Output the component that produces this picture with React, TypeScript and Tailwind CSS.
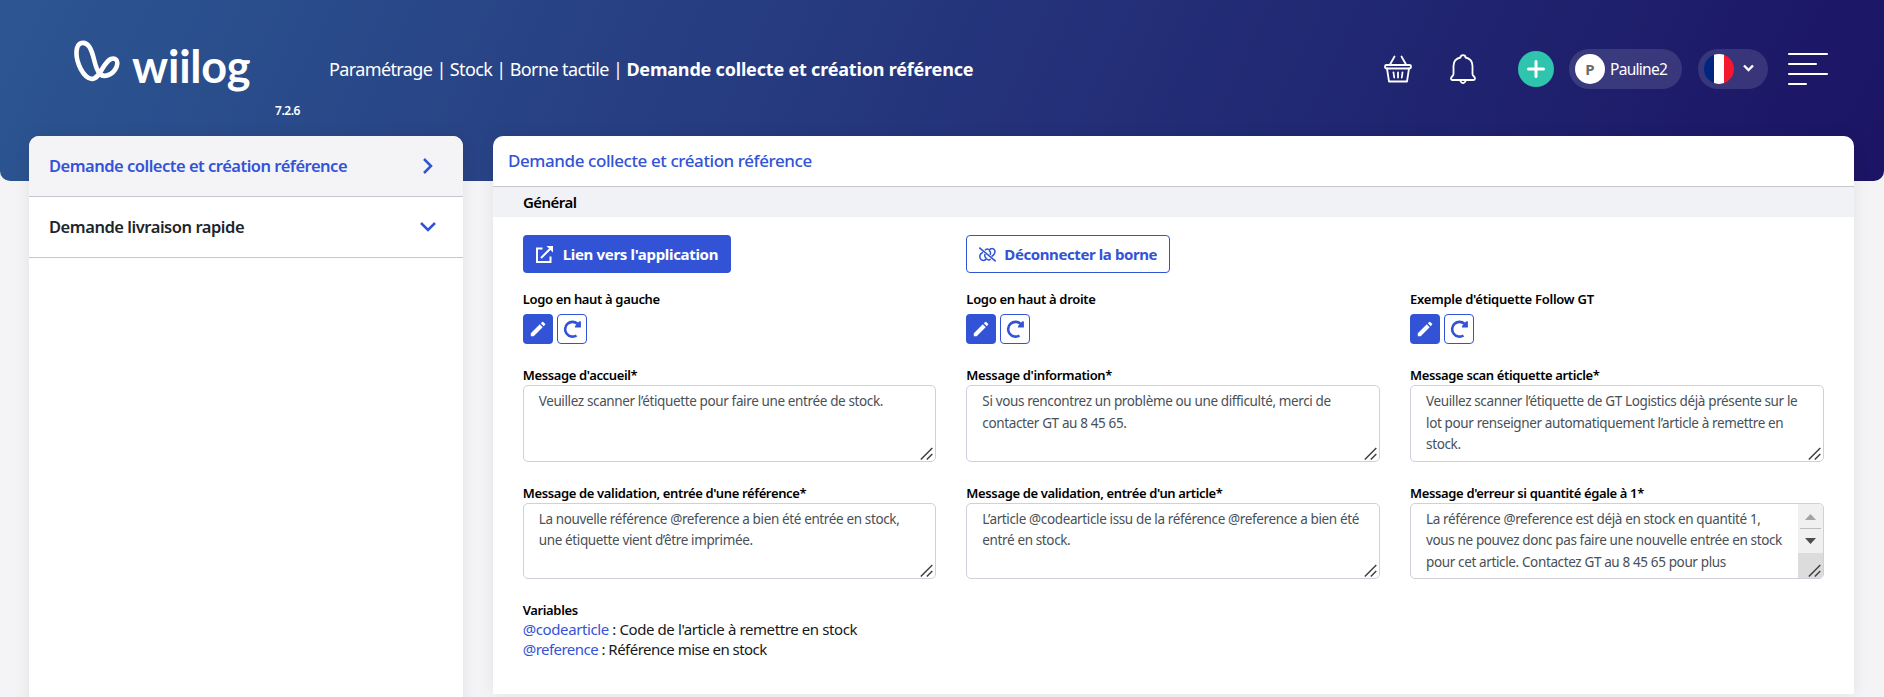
import type { ReactNode } from "react";

const columns = [
  {
    logo: "Logo en haut à gauche",
    logoClass: "tracking-[-0.34px]",
  },
  {
    logo: "Logo en haut à droite",
    logoClass: "tracking-[-0.32px]",
  },
  {
    logo: "Exemple d'étiquette Follow GT",
    logoClass: "tracking-[-0.25px]",
  },
];

const messages: { label: string; lines: string[]; scroll?: boolean; short?: boolean }[] = [
  { label: "Message d'accueil*", lines: ["Veuillez scanner l’étiquette pour faire une entrée de stock."] },
  {
    label: "Message d'information*",
    lines: ["Si vous rencontrez un problème ou une difficulté, merci de", "contacter GT au 8 45 65."],
  },
  {
    label: "Message scan étiquette article*",
    lines: [
      "Veuillez scanner l’étiquette de GT Logistics déjà présente sur le",
      "lot pour renseigner automatiquement l’article à remettre en",
      "stock.",
    ],
  },
  {
    label: "Message de validation, entrée d'une référence*",
    short: true,
    lines: ["La nouvelle référence @reference a bien été entrée en stock,", "une étiquette vient d’être imprimée."],
  },
  {
    label: "Message de validation, entrée d'un article*",
    short: true,
    lines: ["L’article @codearticle issu de la référence @reference a bien été", "entré en stock."],
  },
  {
    label: "Message d'erreur si quantité égale à 1*",
    short: true,
    scroll: true,
    lines: [
      "La référence @reference est déjà en stock en quantité 1,",
      "vous ne pouvez donc pas faire une nouvelle entrée en stock",
      "pour cet article. Contactez GT au 8 45 65 pour plus",
    ],
  },
];

function Logo() {
  return (
    <div className="flex w-[300px] shrink-0 flex-col items-end pl-[74px] text-white">
      <div className="mt-[38px] flex h-[63px] w-[226px] items-start">
        <svg className="mt-[2px] h-[43px] w-[46px] shrink-0" viewBox="0 0 46 43" fill="none" stroke="currentColor" strokeWidth="4.6" strokeLinejoin="round">
          <path d="M15.500 7C21 16 20 28 26 34C30 38 39 35 42.500 27C45 20 41 17.500 37 19C29 22 26 39 18 39C9 38 2 22 2.500 12C3 1 11 .8 15.500 7Z" />
        </svg>
        <span className="ml-[12px] font-['Lato',sans-serif] text-[45px] leading-[56px] font-bold tracking-[-0.2px]">wiilog</span>
      </div>
      <span className="text-[12px] leading-[20px] font-semibold tracking-[-0.44px]">7.2.6</span>
    </div>
  );
}

function BasketIcon() {
  return (
    <svg className="h-[28px] w-[28px]" viewBox="0 0 28 28" fill="none" stroke="currentColor" strokeWidth="1.8" strokeLinecap="round" strokeLinejoin="round">
      <path d="M6 9.500L10.500 1.500M22 9.500L17.500 1.500" />
      <rect x="1" y="10" width="26" height="3.500" rx="1.500" />
      <path d="M3 13.500L5 26.500H23L25 13.500M9.500 17.500L10.200 22.500M14 17.500V22.500M18.500 17.500L17.800 22.500" />
    </svg>
  );
}

function BellIcon() {
  return (
    <svg className="h-[30px] w-[26px]" viewBox="0 0 26 30" fill="none" stroke="currentColor" strokeWidth="1.800" strokeLinecap="round" strokeLinejoin="round">
      <path d="M10.500 3.500C10.500 .3 15.500 .3 15.500 3.500C20 4.500 22.500 8 22.500 12V20C22.500 22 25 22.500 25 24.500Q25 26 23.500 26H2.500Q1 26 1 24.500C1 22.500 3.500 22 3.500 20V12C3.500 8 6 4.500 10.500 3.500Z" />
      <path d="M10 26.300Q13 32 16 26.300" />
    </svg>
  );
}

function Header() {
  return (
    <header className="flex h-[181px] rounded-b-[10px] bg-[linear-gradient(115deg,#2c5692_0%,#243179_55%,#1b1464_100%)] text-white">
      <Logo />
      <div className="flex h-[138px] flex-1 items-center pl-[29px]">
        <div className="text-[18px] leading-[24px] whitespace-pre">
          <span className="tracking-[-0.61px]">{"Paramétrage | Stock | Borne tactile | "}</span>
          <span className="font-bold tracking-[-0.19px]">Demande collecte et création référence</span>
        </div>
      </div>
      <div className="flex h-[138px] shrink-0 items-center pr-[56px]">
        <BasketIcon />
        <span className="ml-[38px]">
          <BellIcon />
        </span>
        <button className="ml-[42px] flex size-[36px] items-center justify-center rounded-full bg-[#2fc4ad]">
          <svg className="size-[18px]" viewBox="0 0 18 18" fill="none" stroke="currentColor" strokeWidth="3" strokeLinecap="round">
            <path d="M9 1.500V16.500M1.500 9H16.500" />
          </svg>
        </button>
        <div className="ml-[15px] flex h-[40px] w-[113px] items-center rounded-full bg-white/12 pl-[6px]">
          <span className="flex size-[30px] items-center justify-center rounded-full bg-white text-[15px] font-bold text-[#6b6b6b]">P</span>
          <span className="ml-[5px] text-[15.500px] leading-[20px] tracking-[-0.72px]">Pauline2</span>
        </div>
        <div className="ml-[16px] flex h-[40px] w-[70px] items-center rounded-full bg-white/12 pl-[6px]">
          <span className="flex size-[30px] overflow-hidden rounded-full">
            <span className="w-[10px] bg-[#00267f]" />
            <span className="w-[10px] bg-white" />
            <span className="w-[10px] bg-[#f31830]" />
          </span>
          <svg className="ml-[9px] h-[8px] w-[11px] -translate-y-px" viewBox="0 0 11 8" fill="none" stroke="currentColor" strokeWidth="2.400">
            <path d="M1 1.500L5.500 6L10 1.500" />
          </svg>
        </div>
        <div className="ml-[20px] flex w-[40px] flex-col gap-[8px]">
          <span className="h-[2px] w-[40px] rounded bg-white" />
          <span className="h-[2px] w-[29px] rounded bg-white" />
          <span className="h-[2px] w-[40px] rounded bg-white" />
          <span className="h-[2px] w-[19px] rounded bg-white" />
        </div>
      </div>
    </header>
  );
}

function Sidebar() {
  return (
    <nav className="h-[600px] w-[434px] shrink-0 overflow-hidden rounded-t-[10px] bg-white text-[16.500px] leading-[24px] font-semibold shadow-[0_0_16px_rgba(0,0,0,0.08)]">
      <div className="flex h-[61px] items-center justify-between border-b border-[#c6c7cb] bg-[#f4f4f7] pr-[30px] pl-[20px] text-[#3353d7]">
        <span className="tracking-[-0.5px]">Demande collecte et création référence</span>
        <svg className="h-[16px] w-[10px]" viewBox="0 0 10 16" fill="none" stroke="currentColor" strokeWidth="2.500">
          <path d="M1 1L8 8L1 15" />
        </svg>
      </div>
      <div className="flex h-[61px] items-center justify-between border-b border-[#c6c7cb] pr-[27px] pl-[20px] text-[#212529]">
        <span className="tracking-[-0.46px]">Demande livraison rapide</span>
        <svg className="h-[10px] w-[16px] text-[#3353d7]" viewBox="0 0 16 10" fill="none" stroke="currentColor" strokeWidth="2.500">
          <path d="M1 1L8 8L15 1" />
        </svg>
      </div>
    </nav>
  );
}

function Label({ children }: { children: ReactNode }) {
  return <div className="text-[13px] leading-[18px] font-semibold tracking-[-0.36px] whitespace-nowrap text-black">{children}</div>;
}

function LogoField({ label, trackingClass }: { label: string; trackingClass: string }) {
  return (
    <div>
      <div className={`text-[13px] leading-[18px] font-semibold text-black ${trackingClass}`}>{label}</div>
      <div className="mt-[6px] flex gap-[4px]">
        <button className="flex size-[30px] items-center justify-center rounded-[4px] bg-[#3353d7] text-white">
          <svg className="size-[16px]" viewBox="0 0 16 16" fill="currentColor">
            <path d="M.8 12.300L9.800 3.300L12.700 6.200L3.700 15.200H.8ZM10.800 2.300L12.200 .9Q12.700 .5 13.200 .9L15.100 2.800Q15.500 3.300 15.100 3.800L13.700 5.200Z" />
          </svg>
        </button>
        <button className="flex size-[30px] items-center justify-center rounded-[4px] border border-[#3353d7] bg-white text-[#3353d7]">
          <svg className="size-[18px]" viewBox="0 0 18 18" fill="none" stroke="currentColor" strokeWidth="2.600">
            <path d="M13.500 15.500A7.400 7.400 0 1 1 14.500 3.700" />
            <path d="M17.900 1.500V7.500H12Q11.500 6.500 12.500 5.500L16 1.500Q17 .8 17.900 1.500Z" fill="currentColor" stroke="none" />
          </svg>
        </button>
      </div>
    </div>
  );
}

function ResizeGrip() {
  return (
    <svg className="absolute right-[2px] bottom-[1px] size-[13px]" viewBox="0 0 13 13" fill="none" stroke="#444" strokeWidth="1.500">
      <path d="M.8 12.500L12.300 1M6.800 12.500L12.300 7" />
    </svg>
  );
}

function Scrollbar() {
  return (
    <div className="flex w-[25px] flex-col items-center bg-[#f0f0f0]">
      <svg className="h-[24px] w-[11px]" viewBox="0 0 11 24">
        <path d="M0 16L5.500 10L11 16Z" fill="#a3a3a3" />
      </svg>
      <span className="h-px w-[21px] bg-[#bdbdbd]" />
      <svg className="h-[24px] w-[11px]" viewBox="0 0 11 24">
        <path d="M0 9L5.500 15L11 9Z" fill="#4d4d4d" />
      </svg>
      <span className="w-full flex-1 bg-[#dcdcdc]" />
    </div>
  );
}

function MessageField({ label, lines, scroll, short }: (typeof messages)[number]) {
  return (
    <div>
      <Label>{label}</Label>
      <div className={`relative mt-px flex justify-between overflow-hidden rounded-[5px] border border-[#ced0da] bg-white ${short ? "h-[76px] pt-[5px]" : "h-[77px] pt-[5.300px]"}`}>
        <div className="pl-[15px] text-[13.500px] leading-[21.400px] tracking-[-0.37px] whitespace-nowrap text-[#495057]">
          {lines.map((line) => (
            <div key={line}>{line}</div>
          ))}
        </div>
        {scroll && (
          <div className="-mt-[5px] flex">
            <Scrollbar />
          </div>
        )}
        <ResizeGrip />
      </div>
    </div>
  );
}

function Actions() {
  return (
    <div className="grid grid-cols-3 gap-x-[30px]">
      <div>
        <button className="flex h-[38px] w-[208px] items-center rounded-[4px] bg-[#3353d7] pl-[13px] text-white">
          <svg className="size-[17px]" viewBox="0 0 17 17" fill="none" stroke="currentColor" strokeWidth="2">
            <path d="M6.500 2.500H1V16H14.500V10.500M5 12L14 3" />
            <path d="M10.500 0H17V6.500Z" fill="currentColor" stroke="none" />
          </svg>
          <span className="ml-[10px] text-[15px] leading-[20px] font-bold tracking-[-0.32px]">Lien vers l'application</span>
        </button>
      </div>
      <div>
        <button className="flex h-[38px] w-[204px] items-center rounded-[4px] border border-[#3353d7] bg-white pl-[12px] text-[#3353d7]">
          <svg className="h-[15px] w-[17px]" viewBox="0 0 17 15" fill="none" stroke="currentColor" strokeWidth="1.500">
            <path d="M.3 .7L16.700 14.300" />
            <path d="M6 3.200C7.500 1.200 9.500 2 10 3M10 3.400C11.500 .8 15 .8 15.800 3.500C16.500 6 15 8 12.500 9.500M4 5.400C1.500 6.500 .3 9 1.300 11.500C2.300 14 6 14 7.500 11.500M7.500 11.500C8.500 13.300 10.500 13.300 11.500 12" />
            <path d="M10 3.400C11.500 4.500 11.700 6.500 11 7.800M6 7C5.500 8.500 6 10.500 7.500 11.500" />
          </svg>
          <span className="ml-[8px] text-[15px] leading-[20px] font-bold tracking-[-0.41px]">Déconnecter la borne</span>
        </button>
      </div>
    </div>
  );
}

export default function App() {
  return (
    <div className="h-[697px] overflow-hidden bg-[#f4f4f7] font-['Noto_Sans',sans-serif]">
      <Header />
      <div className="relative -mt-[45px] flex gap-[30px] px-[29px]">
        <Sidebar />
        <main className="h-[558px] w-[1361px] shrink-0 overflow-hidden rounded-t-[10px] bg-white shadow-[0_0_16px_rgba(0,0,0,0.08)]">
          <h1 className="flex h-[51px] items-center border-b border-[#c6c7cb] pl-[15px] text-[17px] font-medium tracking-[-0.42px] text-[#3353d7]">
            Demande collecte et création référence
          </h1>
          <h2 className="flex h-[30px] items-center bg-[#f1f2f6] pl-[30px] text-[15px] font-semibold tracking-[-0.56px] text-black">Général</h2>
          <div className="pt-[18px] pr-[30.300px] pl-[29.700px]">
            <Actions />
            <div className="mt-[17px] grid grid-cols-3 gap-x-[30px]">
              {columns.map((c) => (
                <LogoField key={c.logo} label={c.logo} trackingClass={c.logoClass} />
              ))}
            </div>
            <div className="mt-[22px] grid grid-cols-3 gap-x-[30px] gap-y-[22px]">
              {messages.map((m) => (
                <MessageField key={m.label} {...m} />
              ))}
            </div>
            <div className="mt-[22px]">
              <Label>Variables</Label>
              <p className="text-[15px] leading-[20px] tracking-[-0.4px] text-[#16181b]">
                <span className="text-[#3353d7]">@codearticle</span> : Code de l'article à remettre en stock
              </p>
              <p className="text-[15px] leading-[20px] tracking-[-0.53px] text-[#16181b]">
                <span className="text-[#3353d7]">@reference</span> : Référence mise en stock
              </p>
            </div>
          </div>
        </main>
      </div>
    </div>
  );
}
